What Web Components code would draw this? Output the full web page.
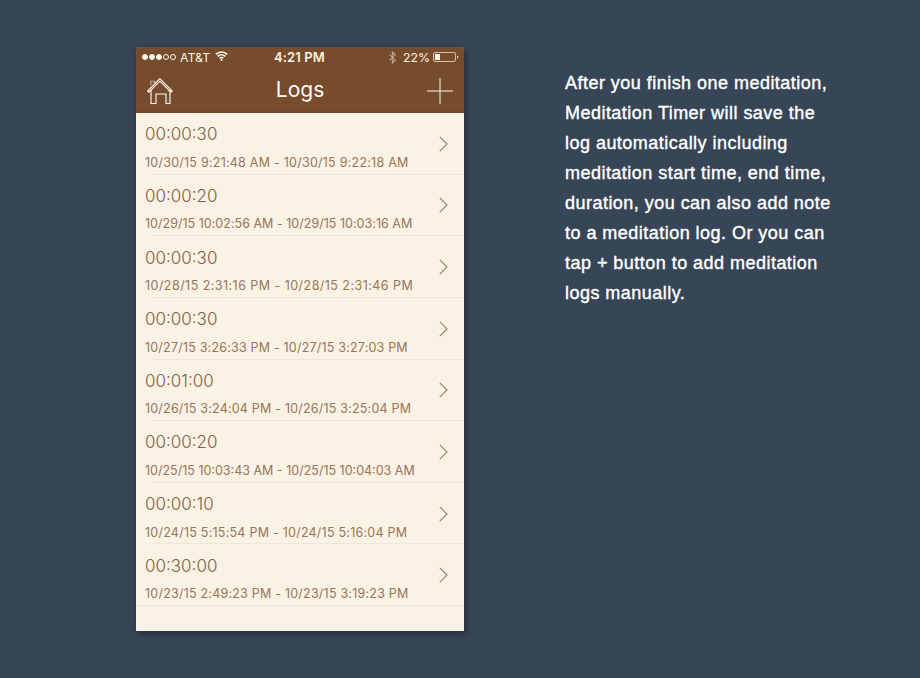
<!DOCTYPE html>
<html>
<head>
<meta charset="utf-8">
<title>Logs</title>
<style>
html, body { margin: 0; height: 100%; }
body { background: #374656; overflow: hidden; }
</style>
</head>
<body>
<promo-page>
    <phone-frame>
        <status-bar slot="status"></status-bar>
        <nav-bar slot="nav" title="Logs"></nav-bar>
        <log-row time="00:00:30" track="0.24" range="10/30/15 9:21:48 AM - 10/30/15 9:22:18 AM"></log-row>
        <log-row time="00:00:20" track="0.02" range="10/29/15 10:02:56 AM - 10/29/15 10:03:16 AM"></log-row>
        <log-row time="00:00:30" track="0.46" range="10/28/15 2:31:16 PM - 10/28/15 2:31:46 PM"></log-row>
        <log-row time="00:00:30" track="0.2" range="10/27/15 3:26:33 PM - 10/27/15 3:27:03 PM"></log-row>
        <log-row time="00:01:00" track="0.2" range="10/26/15 3:24:04 PM - 10/26/15 3:25:04 PM"></log-row>
        <log-row time="00:00:20" track="0" range="10/25/15 10:03:43 AM - 10/25/15 10:04:03 AM"></log-row>
        <log-row time="00:00:10" track="0.24" range="10/24/15 5:15:54 PM - 10/24/15 5:16:04 PM"></log-row>
        <log-row time="00:30:00" track="0.22" range="10/23/15 2:49:23 PM - 10/23/15 3:19:23 PM" last></log-row>
    </phone-frame>
    <promo-text>After you finish one meditation, Meditation Timer will save the log automatically including meditation start time, end time, duration, you can also add note to a meditation log. Or you can tap + button to add meditation logs manually.</promo-text>
</promo-page>
<script>
class PromoPage extends HTMLElement {
    constructor() {
        super();
        this.attachShadow({ mode: 'open' });
        this.shadowRoot.innerHTML = `
            <style>
                :host {
                    display: flex;
                    align-items: flex-start;
                    padding: 47px 0 0 136px;
                    gap: 101px;
                }
            </style>
            <slot></slot>
        `;
    }
}

class PhoneFrame extends HTMLElement {
    constructor() {
        super();
        this.attachShadow({ mode: 'open' });
        this.shadowRoot.innerHTML = `
            <style>
                :host {
                    display: block;
                    flex: none;
                    width: 328px;
                    height: 584px;
                    background: #faf2e5;
                    box-shadow: 2px 3px 7px rgba(20, 28, 38, 0.55);
                    font-family: Inter, "Liberation Sans", sans-serif;
                }
                .head {
                    background: #774c2d;
                    height: 66px;
                    display: flex;
                    flex-direction: column;
                }
            </style>
            <div class="head">
                <slot name="status"></slot>
                <slot name="nav"></slot>
            </div>
            <slot></slot>
        `;
    }
}

class StatusBar extends HTMLElement {
    constructor() {
        super();
        this.attachShadow({ mode: 'open' });
        this.shadowRoot.innerHTML = `
            <style>
                :host {
                    display: grid;
                    grid-template-columns: 1fr auto 1fr;
                    align-items: center;
                    height: 20px;
                    padding: 0 5px 0 6px;
                    font-size: 12.3px;
                    color: #fbf3e6;
                }
                .left, .right { display: flex; align-items: center; }
                .right { justify-content: flex-end; }
                .dots { display: flex; gap: 1px; margin-right: 4px; }
                .dots i {
                    width: 6px;
                    height: 6px;
                    border-radius: 50%;
                    border: 0.5px solid #fbf3e6;
                    box-sizing: border-box;
                }
                .dots i.on { background: #fff; }
                .wifi { margin-left: 5px; margin-top: -2px; }
                .clock { font-weight: 600; font-size: 13px; letter-spacing: 0.1px; margin-left: -2px; }
                .bt { margin-right: 7px; opacity: 0.55; }
                .batt { margin-left: 3px; }
            </style>
            <div class="left">
                <span class="dots"><i class="on"></i><i class="on"></i><i class="on"></i><i></i><i></i></span>
                <span>AT&amp;T</span>
                <svg class="wifi" width="13" height="10" viewBox="0 0 13 10" fill="none" stroke="#fff">
                    <path d="M0.8 3.4a8.2 8.2 0 0 1 11.4 0M2.7 5.4a5.4 5.4 0 0 1 7.6 0M4.6 7.3a2.8 2.8 0 0 1 3.8 0" stroke-width="1.5"/>
                    <circle cx="6.5" cy="8.9" r="1" fill="#fff" stroke="none"/>
                </svg>
            </div>
            <div class="clock">4:21 PM</div>
            <div class="right">
                <svg class="bt" width="7" height="13" viewBox="0 0 7 13" fill="none" stroke="#fbf3e6" stroke-width="1.1">
                    <path d="M0.6 3.6 6.2 9.2 3.4 12V1L6.2 3.8 0.6 9.4"/>
                </svg>
                <span>22%</span>
                <svg class="batt" width="26" height="10" viewBox="0 0 26 10" fill="none">
                    <rect x="0.5" y="0.5" width="22" height="9" rx="1.5" stroke="#fbf3e6" stroke-opacity="0.7"/>
                    <rect x="2" y="2" width="5" height="6" fill="#fbf3e6"/>
                    <path d="M24 3.4c1 .2 1.4.8 1.4 1.6s-.4 1.4-1.4 1.6z" fill="#fbf3e6" fill-opacity="0.8"/>
                </svg>
            </div>
        `;
    }
}

class NavBar extends HTMLElement {
    constructor() {
        super();
        this.attachShadow({ mode: 'open' });
        this.shadowRoot.innerHTML = `
            <style>
                :host {
                    display: grid;
                    grid-template-columns: 1fr auto 1fr;
                    align-items: center;
                    padding: 0 11px 2px 11px;
                    color: #fffaf2;
                    border-bottom: 2px solid #70452a;
                    box-sizing: border-box;
                    flex: none;
                    height: 46px;
                }
                .title { font-size: 21px; line-height: 42px; font-weight: 400; margin-top: 2px; }
                svg { display: block; margin-top: 4px; }
                .add { justify-self: end; }
            </style>
            <svg class="home" width="26" height="26" viewBox="0 0 26 26" fill="none" stroke="#fdf6ea" stroke-width="1.15">
                <path d="M3.8 7V3.2H7.6V5" stroke-opacity="0.55"/>
                <path d="M12.8 0.7 0.5 13 1.8 14.2 12.8 3.2 23.9 14.2 25.2 13Z"/>
                <path d="M4 12V25.5H9V16H19V25.5H23V12"/>
            </svg>
            <div class="title">${this.getAttribute('title')}</div>
            <svg class="add" width="26" height="26" viewBox="0 0 26 26" stroke="#fbf3e6" stroke-width="1">
                <path d="M13 0V26M0 13H26"/>
            </svg>
        `;
    }
}

class LogRow extends HTMLElement {
    constructor() {
        super();
        this.attachShadow({ mode: 'open' });
        const last = this.hasAttribute('last');
        this.shadowRoot.innerHTML = `
            <style>
                :host {
                    display: block;
                    height: 61.65px;
                    position: relative;
                    color: #86603f;
                }
                .row {
                    display: flex;
                    align-items: center;
                    justify-content: space-between;
                    height: 100%;
                    padding: 0 16px 0 9px;
                    box-sizing: border-box;
                }
                .time { font-size: 17px; font-weight: 300; line-height: 21px; margin-top: 6.4px; }
                .range {
                    font-size: 12.5px;
                    line-height: 15px;
                    margin-top: 9.6px;
                    color: #977558;
                    letter-spacing: ${this.getAttribute('track')}px;
                }
                .line {
                    position: absolute;
                    left: ${last ? 0 : 16}px;
                    right: 0;
                    bottom: 0;
                    height: 1px;
                    background: #f0e5d6;
                }
            </style>
            <div class="row">
                <div class="text">
                    <div class="time">${this.getAttribute('time')}</div>
                    <div class="range">${this.getAttribute('range')}</div>
                </div>
                <svg width="9" height="16" viewBox="0 0 9 16" fill="none" stroke="#a07c5e" stroke-width="1.1">
                    <path d="M0.8 0.8 8 8 0.8 15.2"/>
                </svg>
            </div>
            <div class="line"></div>
        `;
    }
}

class PromoText extends HTMLElement {
    constructor() {
        super();
        this.attachShadow({ mode: 'open' });
        this.shadowRoot.innerHTML = `
            <style>
                :host {
                    display: block;
                    width: 272px;
                    margin-top: 21px;
                    font-family: "Liberation Sans", Arial, sans-serif;
                    font-size: 18px;
                    letter-spacing: 0.47px;
                    line-height: 30px;
                    color: #ffffff;
                    -webkit-text-stroke: 0.4px #ffffff;
                }
            </style>
            <slot></slot>
        `;
    }
}

customElements.define('promo-page', PromoPage);
customElements.define('phone-frame', PhoneFrame);
customElements.define('status-bar', StatusBar);
customElements.define('nav-bar', NavBar);
customElements.define('log-row', LogRow);
customElements.define('promo-text', PromoText);
</script>
</body>
</html>
